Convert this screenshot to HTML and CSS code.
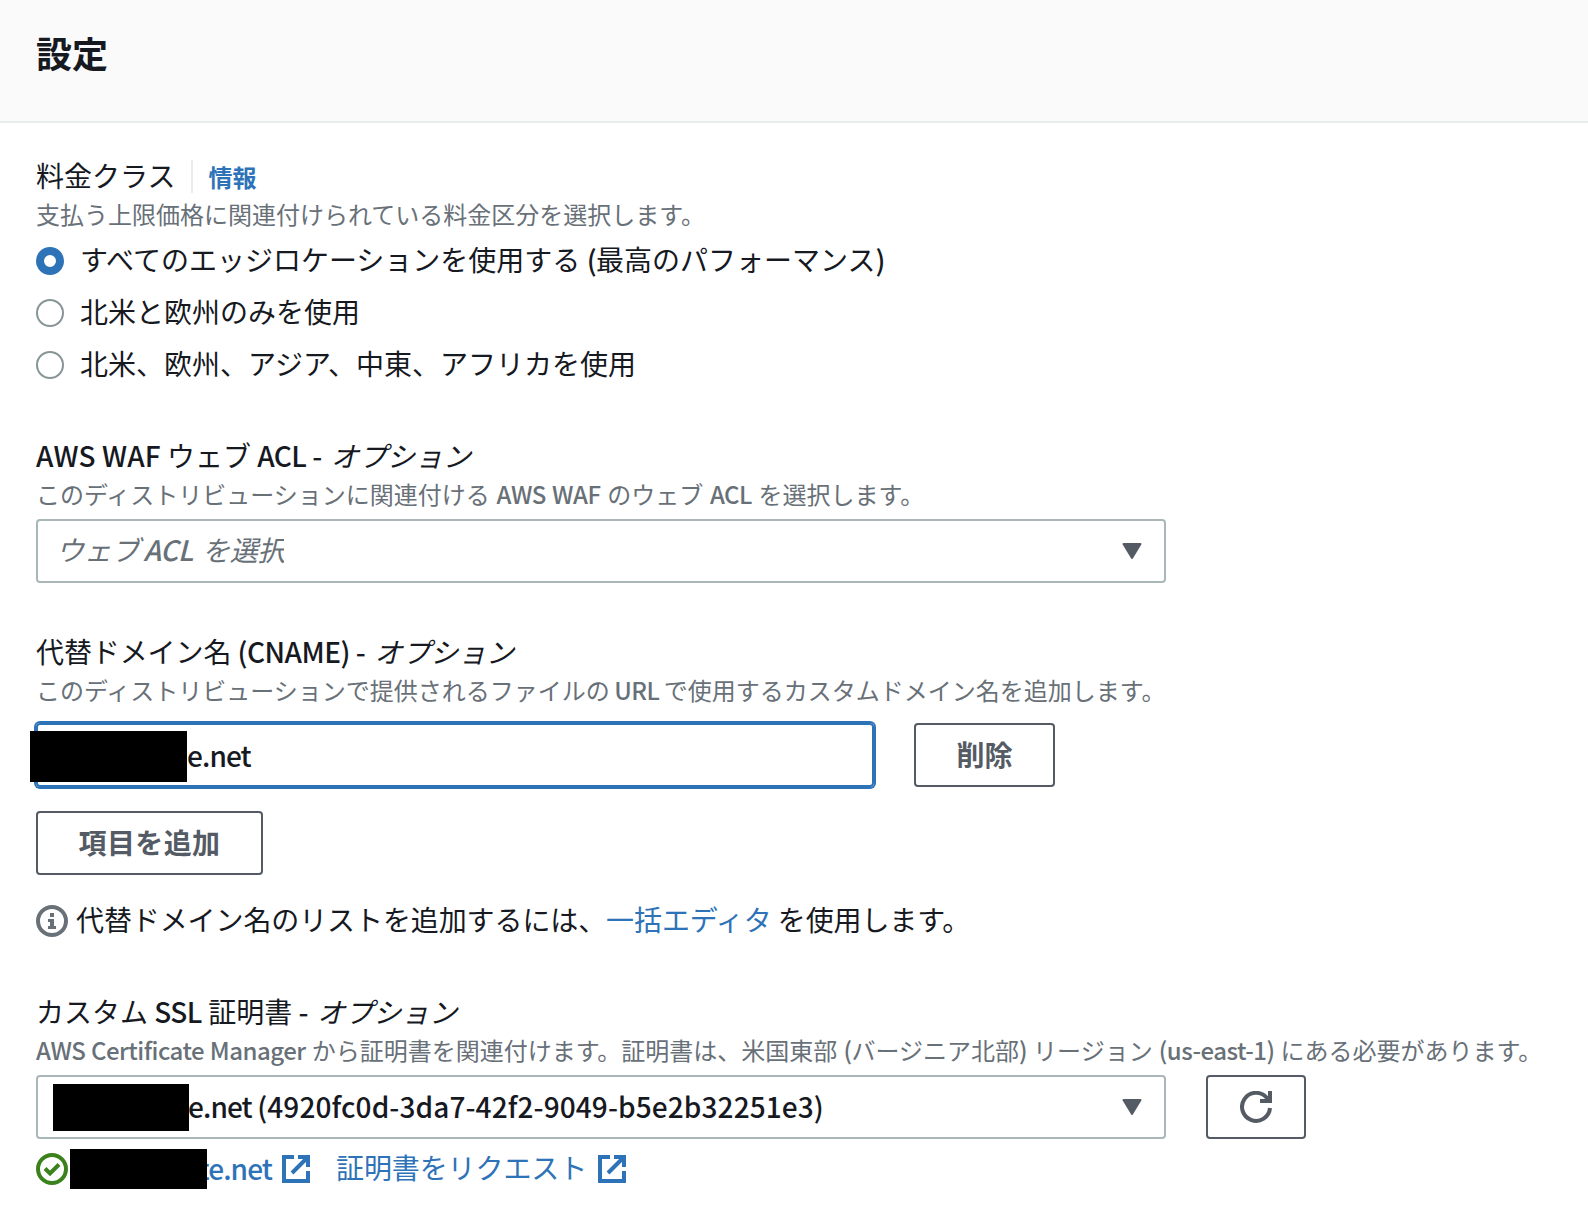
FILE: index.html
```html
<!DOCTYPE html>
<html lang="ja">
<head>
  <meta charset="UTF-8">
  <title>設定</title>
  <link rel="stylesheet" href="styles.css">
</head>
<body>
  <header class="header">
    <h2 class="title">設定</h2>
  </header>

  <main class="content">
    <section class="field price">
      <div class="label">料金クラス<a class="info">情報</a></div>
      <div class="desc">支払う上限価格に関連付けられている料金区分を選択します。</div>
      <label class="radio"><span class="dot checked"></span><span>すべてのエッジロケーションを使用する <span class="en">(</span>最高のパフォーマンス<span class="en">)</span></span></label>
      <label class="radio"><span class="dot"></span>北米と欧州のみを使用</label>
      <label class="radio"><span class="dot"></span>北米、欧州、アジア、中東、アフリカを使用</label>
    </section>

    <section class="field waf">
      <div class="label"><span><span class="en wide">AWS WAF</span> ウェブ <span class="en">ACL -</span> <i>オプション</i></span></div>
      <div class="desc">このディストリビューションに関連付ける <span class="en">AWS WAF</span> のウェブ <span class="en">ACL</span> を選択します。</div>
      <div class="select">
        <span class="placeholder">ウェブ <span class="en">ACL</span> を選択</span>
        <svg class="caret" viewBox="0 0 20 16"><path d="M1.5 1h17L10 15z"/></svg>
      </div>
    </section>

    <section class="field cname">
      <div class="label"><span>代替ドメイン名 <span class="en">(CNAME) -</span> <i>オプション</i></span></div>
      <div class="desc">このディストリビューションで提供されるファイルの <span class="en">URL</span> で使用するカスタムドメイン名を追加します。</div>
      <div class="row">
        <div class="input"><span class="mask"></span><span class="en low">e.net</span></div>
        <button class="btn delete">削除</button>
      </div>
      <button class="btn add">項目を追加</button>
      <div class="hint">
        <svg class="icon gray" viewBox="0 0 32 32">
          <circle cx="16" cy="16" r="14"/>
          <path class="fill" d="M14 8h4v4h-4zM12 14h6v7h2v3h-8v-3h2v-4h-2z"/>
        </svg>
        <span class="hint-text">代替ドメイン名のリストを追加するには、<a class="link">一括エディタ</a> を使用します。</span>
      </div>
    </section>

    <section class="field ssl">
      <div class="label"><span>カスタム <span class="en">SSL</span> 証明書 <span class="en">-</span> <i>オプション</i></span></div>
      <div class="desc"><span class="en">AWS Certificate Manager</span> から証明書を関連付けます。証明書は、米国東部 <span class="en">(</span>バージニア北部<span class="en">)</span> リージョン <span class="en">(us-east-1)</span> にある必要があります。</div>
      <div class="row">
        <div class="select cert">
          <span class="mask"></span>
          <span class="value"><span class="en low">e.net </span><span class="en id">(4920fc0d-3da7-42f2-9049-b5e2b32251e3)</span></span>
          <svg class="caret" viewBox="0 0 20 16"><path d="M1.5 1h17L10 15z"/></svg>
        </div>
        <button class="btn refresh">
          <svg viewBox="0 0 32 32"><path d="M30 17A14 14 0 1 1 26.500 6.500L30 10"/><path d="M30 0v10H20"/></svg>
        </button>
      </div>
      <div class="links">
        <svg class="icon green" viewBox="0 0 32 32">
          <circle cx="16" cy="16" r="14"/>
          <path d="M9 15.500l5 5 9-9"/>
        </svg>
        <span class="mask"></span>
        <a class="link domain"><span class="en low">te.net</span></a>
        <svg class="ext" viewBox="0 0 28 28"><path d="M12 2H2v24h24V16"/><path d="M16 2h10v10M26 2L10 18"/></svg>
        <a class="link request">証明書をリクエスト</a>
        <svg class="ext" viewBox="0 0 28 28"><path d="M12 2H2v24h24V16"/><path d="M16 2h10v10M26 2L10 18"/></svg>
      </div>
    </section>
  </main>
</body>
</html>
```

FILE: styles.css
```css
* {
  box-sizing: border-box;
}

body {
  margin: 0;
  background: #fff;
  color: #16191f;
  font-family: "Noto Sans CJK JP", sans-serif;
  font-size: 28px;
  white-space: nowrap;
  overflow: hidden;
  text-spacing-trim: space-all;
}

.header {
  height: 123px;
  padding: 26px 36px 0;
  background: #fafafa;
  border-bottom: 2px solid #eaeded;
}

.title {
  margin: 0;
  font-size: 36px;
  line-height: 52px;
}

.content {
  padding: 32px 36px 0;
}

.en {
  font-weight: 500;
  letter-spacing: -0.5px;
}

.wide {
  letter-spacing: 0.1px;
}

.low {
  letter-spacing: -0.9px;
}

.id {
  letter-spacing: 0.1px;
}

.label {
  display: flex;
  align-items: center;
  height: 42px;
  line-height: 40px;
  padding-bottom: 2px;
}

.label i {
  margin-left: 3px;
}

.info {
  height: 33px;
  margin: 2px 0 0 16px;
  padding-left: 15px;
  border-left: 2px solid #eaeded;
  color: #2e73b8;
  font-size: 24px;
  font-weight: bold;
  line-height: 33px;
}

.desc {
  height: 36px;
  color: #687078;
  font-size: 24px;
  line-height: 34px;
}

.price .desc {
  margin-bottom: 2px;
}

.radio {
  display: flex;
  align-items: center;
  gap: 16px;
  height: 52px;
  padding-bottom: 4px;
  line-height: 48px;
}

.dot {
  width: 28px;
  height: 28px;
  margin-top: 4px;
  border: 2px solid #879596;
  border-radius: 50%;
}

.checked {
  border: 8px solid #2e73b8;
}

.waf {
  margin-top: 44px;
}

.waf .desc {
  word-spacing: 1.3px;
}

.select {
  position: relative;
  display: flex;
  align-items: center;
  justify-content: space-between;
  width: 1130px;
  height: 64px;
  margin-top: 6px;
  padding: 0 22px 0 18px;
  border: 2px solid #aab7b8;
  border-radius: 4px;
}

.placeholder {
  width: 228px;
  padding-bottom: 4px;
  color: #687078;
  font-style: italic;
  line-height: 56px;
  letter-spacing: -0.2px;
  overflow: hidden;
}

.placeholder .en {
  margin: 0 3px 0 -2px;
}

.caret {
  width: 20px;
  height: 16px;
  fill: #545b64;
  stroke: #545b64;
  stroke-width: 2;
  stroke-linejoin: round;
}

.cname {
  margin-top: 48px;
}

.cname .label {
  letter-spacing: -0.1px;
}

.cname .desc {
  word-spacing: -1px;
}

.row {
  display: flex;
  gap: 40px;
}

.cname .row {
  margin: 14px 0 24px;
}

.input {
  position: relative;
  display: flex;
  align-items: center;
  width: 838px;
  height: 64px;
  padding-left: 149px;
  border: 2px solid #2e73b8;
  border-radius: 4px;
  box-shadow: 0 0 0 2px #2e73b8;
}

/* hidden part of the domain name */
.mask {
  position: absolute;
  background: #000;
}

.input .mask {
  left: -8px;
  top: 6px;
  width: 157px;
  height: 51px;
}

.btn {
  height: 64px;
  padding: 0 0 3px;
  background: #fff;
  border: 2px solid #545b64;
  border-radius: 4px;
  color: #545b64;
  font-family: inherit;
  font-size: 28px;
  font-weight: bold;
}

.delete {
  width: 141px;
}

.add {
  display: block;
  width: 227px;
  letter-spacing: 0.4px;
}

.hint {
  display: flex;
  align-items: center;
  gap: 8px;
  height: 42px;
  margin-top: 25px;
  line-height: 38px;
}

.hint-text {
  padding-bottom: 4px;
  letter-spacing: -0.1px;
}

.icon {
  width: 32px;
  height: 32px;
  fill: none;
  stroke-width: 4;
}

.gray {
  stroke: #687078;
}

.gray .fill {
  fill: #687078;
  stroke: none;
}

.green {
  stroke: #3b821d;
}

.link {
  color: #2e73b8;
}

.ssl {
  margin-top: 49px;
}

.ssl .desc {
  word-spacing: 0.7px;
}

.ssl .row {
  margin-top: 6px;
}

.cert {
  margin-top: 0;
  padding-left: 150px;
}

.value {
  padding-bottom: 2px;
  white-space: pre;
}

.cert .mask {
  left: 15px;
  top: 7px;
  width: 136px;
  height: 47px;
}

.refresh {
  width: 100px;
  padding: 0;
}

.refresh svg {
  display: block;
  width: 32px;
  height: 32px;
  margin: 0 auto;
  fill: none;
  stroke: #545b64;
  stroke-width: 4;
}

.links {
  position: relative;
  display: flex;
  align-items: center;
  height: 42px;
  margin-top: 9px;
  line-height: 38px;
}

.links .mask {
  left: 34px;
  top: 1px;
  width: 137px;
  height: 40px;
}

.domain {
  width: 80px;
  margin: 0 10px 0 124px;
  padding-bottom: 3px;
  text-align: right;
}

.request {
  margin: 0 11px 0 26px;
  padding-bottom: 4px;
  letter-spacing: -0.1px;
}

.ext {
  width: 28px;
  height: 28px;
  fill: none;
  stroke: #2e73b8;
  stroke-width: 4;
}
```
